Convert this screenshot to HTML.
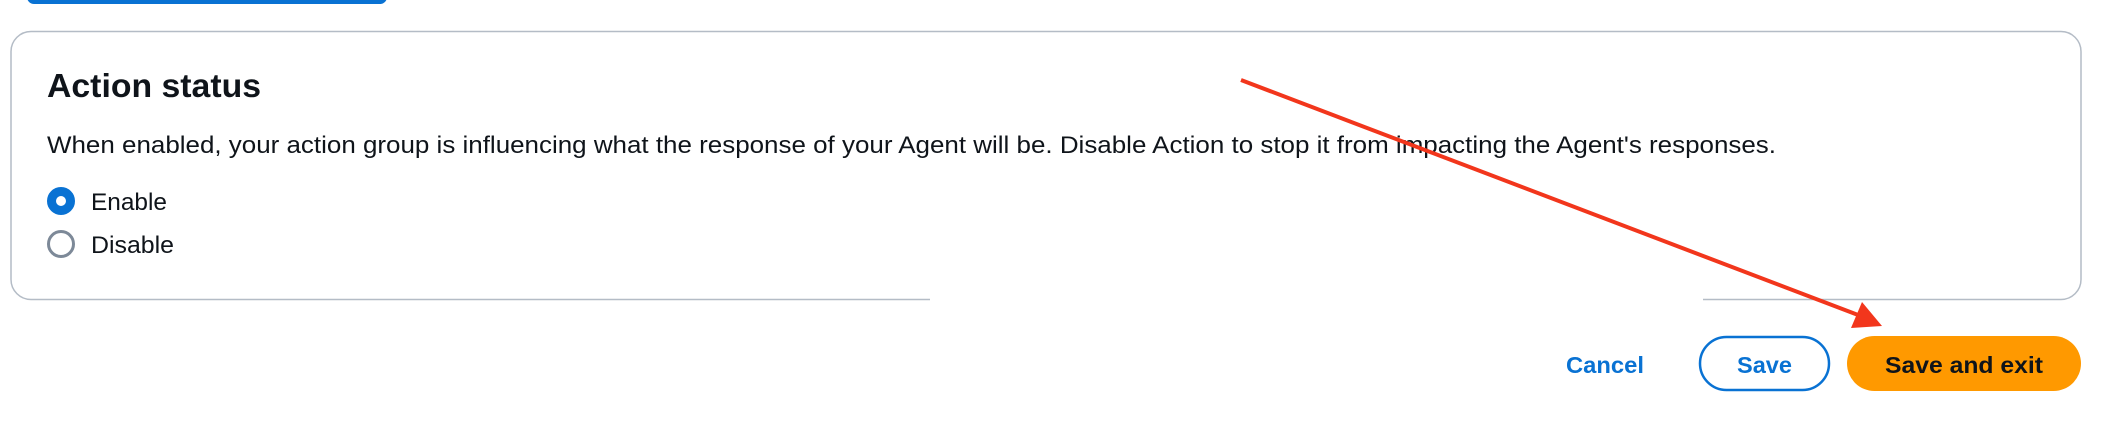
<!DOCTYPE html>
<html><head><meta charset="utf-8"><style>html,body{margin:0;padding:0;background:#fff;width:2110px;height:432px;overflow:hidden}</style></head>
<body>
<svg width="2110" height="432" viewBox="0 0 2110 432" xmlns="http://www.w3.org/2000/svg" font-family="Liberation Sans, sans-serif">
<rect x="27" y="-10" width="360" height="14" rx="7" fill="#0972d3"/>
<rect x="11" y="31.5" width="2070" height="268" rx="20" fill="#fff" stroke="#b4bcc6" stroke-width="1.5"/>
<rect x="930" y="296" width="773" height="6" fill="#fff"/>
<text x="47" y="97" font-size="33" font-weight="bold" fill="#0f141a" textLength="214" lengthAdjust="spacingAndGlyphs">Action status</text>
<text x="47" y="153" font-size="24" fill="#0f141a" textLength="1729" lengthAdjust="spacingAndGlyphs">When enabled, your action group is influencing what the response of your Agent will be. Disable Action to stop it from impacting the Agent's responses.</text>
<circle cx="61" cy="201" r="9.5" fill="#fff" stroke="#0972d3" stroke-width="9"/>
<text x="91" y="210" font-size="24" fill="#0f141a" textLength="76" lengthAdjust="spacingAndGlyphs">Enable</text>
<circle cx="61" cy="244" r="12.5" fill="#fff" stroke="#7d8998" stroke-width="3"/>
<text x="91" y="253" font-size="24" fill="#0f141a" textLength="83" lengthAdjust="spacingAndGlyphs">Disable</text>
<text x="1566" y="373" font-size="23" font-weight="bold" fill="#0972d3" textLength="78" lengthAdjust="spacingAndGlyphs">Cancel</text>
<rect x="1700" y="337" width="129" height="53" rx="26.5" fill="#fff" stroke="#0972d3" stroke-width="2.5"/>
<text x="1737" y="373" font-size="23" font-weight="bold" fill="#0972d3" textLength="55" lengthAdjust="spacingAndGlyphs">Save</text>
<rect x="1847" y="336" width="234" height="55" rx="27.5" fill="#ff9900"/>
<text x="1885" y="373" font-size="23" font-weight="bold" fill="#0f141a" textLength="158" lengthAdjust="spacingAndGlyphs">Save and exit</text>
<line x1="1241" y1="80" x2="1866" y2="318" stroke="#f2361c" stroke-width="4"/>
<polygon points="1851,328 1882,326 1862,302" fill="#f2361c"/>
</svg>
</body></html>
